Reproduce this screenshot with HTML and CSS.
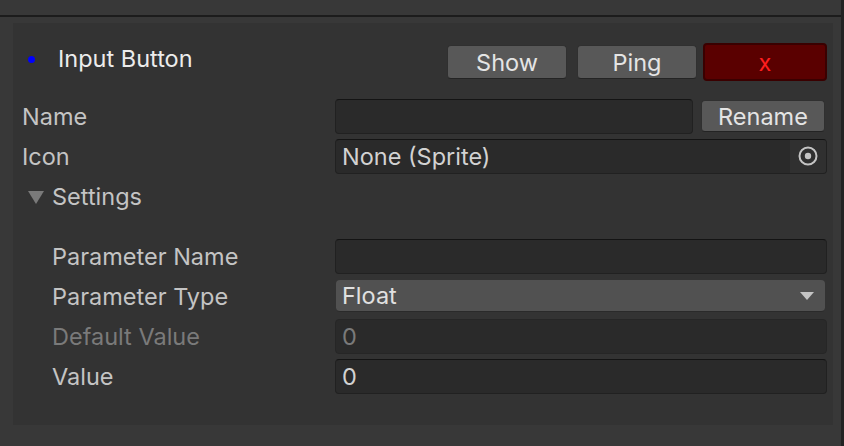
FILE: index.html
```html
<!DOCTYPE html>
<html lang="en">
<head>
  <meta charset="UTF-8" />
  <title>Input Button Inspector</title>
  <link rel="stylesheet" href="styles.css">
</head>
<body>

<div class="window">
  <div class="main">
    <div class="toolbar"></div>
    <div class="divider"></div>

    <div class="content">
      <div class="card">

        <!-- Header row -->
        <div class="header">
          <span class="dot"></span>
          <span class="title">Input Button</span>
          <div class="header-buttons">
            <button class="btn btn-show">Show</button>
            <button class="btn btn-ping">Ping</button>
            <button class="btn btn-remove">x</button>
          </div>
        </div>

        <div class="row">
          <label class="label">Name</label>
          <div class="control with-button">
            <div class="field"></div>
            <button class="btn btn-rename">Rename</button>
          </div>
        </div>

        <div class="row">
          <label class="label">Icon</label>
          <div class="control">
            <div class="field object-field">
              <span class="value">None (Sprite)</span>
              <span class="picker">
                <svg width="22" height="22" viewBox="0 0 22 22">
                  <circle cx="11" cy="11" r="8.5" fill="none" stroke="#c4c4c4" stroke-width="2"/>
                  <circle cx="11" cy="11" r="3.2" fill="#c4c4c4"/>
                </svg>
              </span>
            </div>
          </div>
        </div>

        <div class="row">
          <div class="foldout">
            <span class="fold-arrow"></span>
            <span>Settings</span>
          </div>
        </div>

        <div class="spacer"></div>

        <div class="row">
          <label class="label indent">Parameter Name</label>
          <div class="control">
            <div class="field"></div>
          </div>
        </div>

        <div class="row">
          <label class="label indent">Parameter Type</label>
          <div class="control">
            <div class="dropdown">
              <span>Float</span>
              <span class="drop-arrow"></span>
            </div>
          </div>
        </div>

        <div class="row">
          <label class="label indent disabled">Default Value</label>
          <div class="control">
            <div class="field disabled"><span class="value">0</span></div>
          </div>
        </div>

        <div class="row">
          <label class="label indent">Value</label>
          <div class="control">
            <div class="field"><span class="value">0</span></div>
          </div>
        </div>

      </div>
    </div>
  </div>
  <div class="edge"></div>
</div>

</body>
</html>
```

FILE: styles.css
```css
/* Base */
body {
  margin: 0;
  background: #383838;
  font-family: Inter, "Noto Sans", sans-serif;
  font-size: 23.5px;
  color: #c4c4c4;
}
.window {
  display: flex;
  height: 446px;
}
.main {
  flex: 1;
}
.edge {
  width: 3px;
  background: #232323;
}
.toolbar {
  height: 15px;
}
.divider {
  height: 2px;
  background: #1c1c1c;
}
.content {
  padding: 6px 8px 0 13px;
}

/* Inner panel */
.card {
  background: #333333;
  height: 402px;
  box-sizing: border-box;
  padding: 20px 6px 0 9px;
}

/* Header */
.header {
  display: flex;
  align-items: center;
  height: 38px;
  margin-bottom: 17px;
}
.dot {
  width: 7px;
  height: 7px;
  border-radius: 50%;
  background: #0000ff;
  margin: 0 23px 6px 6px;
}
.title {
  color: #ececec;
  flex: 1;
  margin-bottom: 8px;
}
.header-buttons {
  display: flex;
  align-items: center;
}
.btn {
  font-family: inherit;
  font-size: 23.5px;
  color: #e4e4e4;
  background: #585858;
  border: 1px solid #303030;
  border-bottom-color: #242424;
  border-radius: 4px;
  padding: 0;
  height: 34px;
  cursor: pointer;
}
.btn-show,
.btn-ping {
  width: 120px;
  margin-right: 10px;
}
.btn-ping {
  margin-right: 6px;
}
.btn-remove {
  width: 124px;
  height: 38px;
  background: #5a0000;
  border: 2px solid #3a0000;
  color: #ff1e1e;
}

/* Property rows */
.row {
  display: flex;
  align-items: center;
  height: 36px;
  margin-bottom: 4px;
}
.label {
  width: 313px;
  flex-shrink: 0;
}
.label.indent {
  width: 283px;
  padding-left: 30px;
}
.label.disabled {
  color: #7a7a7a;
}
.control {
  flex: 1;
  display: flex;
  align-items: center;
}
.with-button {
  gap: 8px;
}
.field {
  flex: 1;
  height: 35px;
  box-sizing: border-box;
  background: #2a2a2a;
  border: 1px solid #212121;
  border-top-color: #141414;
  border-radius: 4px;
  display: flex;
  align-items: center;
  color: #d2d2d2;
}
.field .value {
  padding-left: 6px;
  flex: 1;
}
.field.disabled {
  color: #7a7a7a;
  border-color: #262626;
}
.btn-rename {
  width: 124px;
  height: 32px;
  margin-right: 2px;
}
.object-field {
  overflow: hidden;
}
.picker {
  width: 36px;
  height: 100%;
  background: #303030;
  display: flex;
  align-items: center;
  justify-content: center;
}

/* Foldout */
.foldout {
  display: flex;
  align-items: center;
}
.fold-arrow {
  width: 0;
  height: 0;
  border-left: 8px solid transparent;
  border-right: 8px solid transparent;
  border-top: 13px solid #7a7a7a;
  margin: 2px 8px 0 6px;
}
.spacer {
  height: 20px;
}

/* Dropdown */
.dropdown {
  flex: 1;
  height: 32px;
  margin: 0 2px 0 1px;
  background: #515151;
  border-radius: 4px;
  border-bottom: 1px solid #2a2a2a;
  box-sizing: border-box;
  display: flex;
  align-items: center;
  justify-content: space-between;
  padding: 0 11px 0 6px;
  color: #e0e0e0;
}
.drop-arrow {
  width: 0;
  height: 0;
  border-left: 7px solid transparent;
  border-right: 7px solid transparent;
  border-top: 8px solid #c4c4c4;
}
```
